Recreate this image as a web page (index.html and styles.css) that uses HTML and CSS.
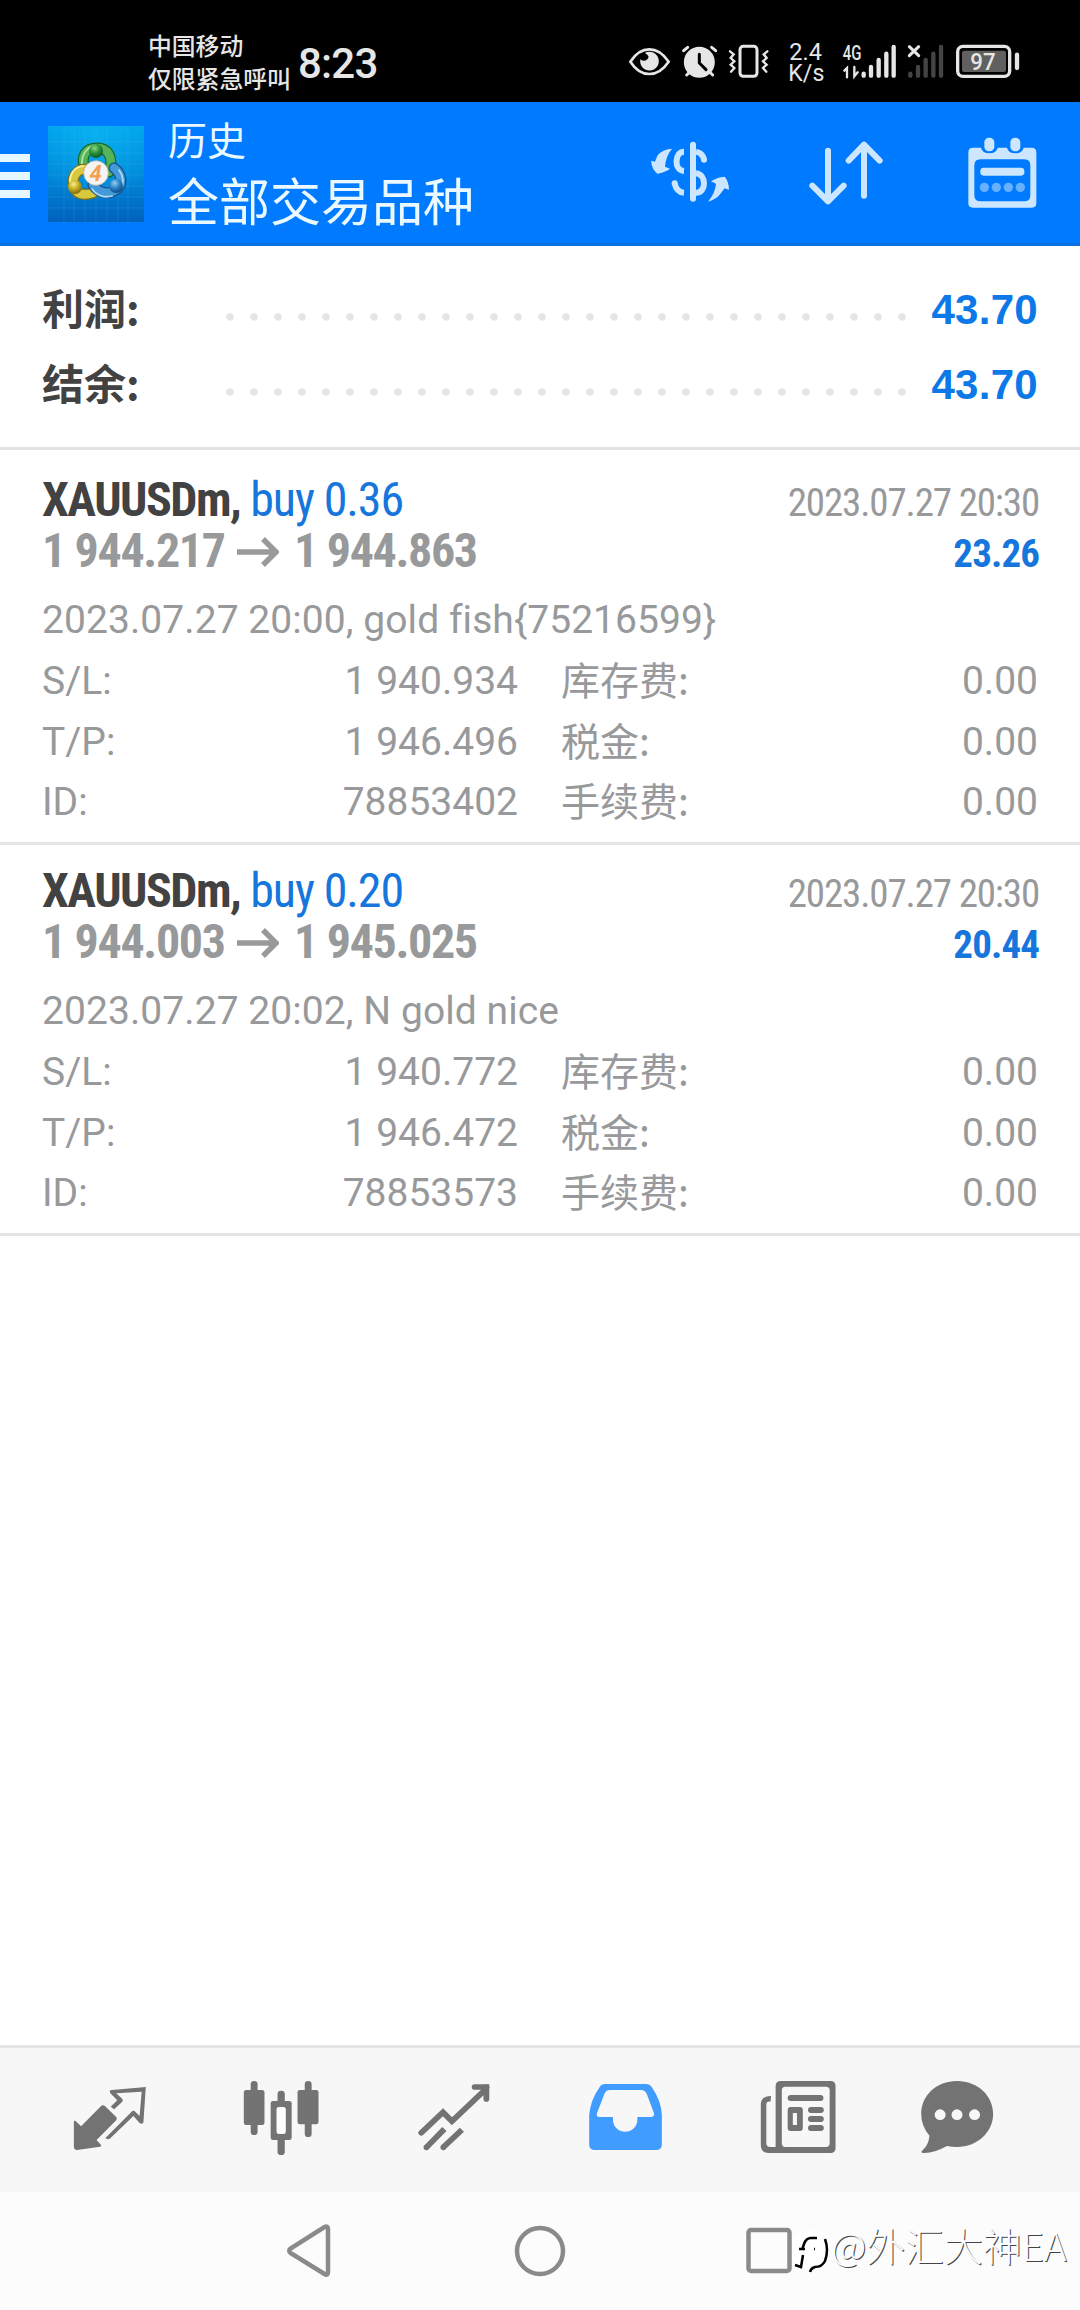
FILE: index.html
```html
<!DOCTYPE html>
<html lang="zh-CN">
<head>
<meta charset="utf-8">
<title>历史</title>
<link rel="stylesheet" href="styles.css">
</head>
<body>
<div class="screen">
  <header class="status">
    <div class="carrier"><span>中国移动</span><span>仅限紧急呼叫</span></div>
    <div class="clock">8:23</div>
    <svg class="status-icons" viewBox="0 0 1290 225">
      <g fill="none" stroke="#e6e6e6" stroke-width="8">
        <path d="M61 110Q85 73 118 73T176 110Q151 147 118 147T61 110Z"/>
        <rect x="390" y="64" width="51" height="90" rx="10" stroke-width="9"/>
        <path d="M360 79l11 9-9 11 11 10-11 10 11 10-10 11M472 79l-11 9 9 11-11 10 11 10-11 10 10 11" stroke-width="7" stroke-linecap="round"/>
        <rect x="1043" y="64" width="156" height="90" rx="16" stroke-width="10"/>
      </g>
      <path d="M105 84A28 28 0 1 1 91 103Q102 112 112 103T105 84Z" fill="#e6e6e6"/>
      <g stroke="#e6e6e6" stroke-width="9" stroke-linecap="round">
        <path d="M221 77l12-10M317 77l-12-10M230 150l12-12M308 150l-12-12"/>
        <circle cx="268" cy="112" r="42" fill="#e6e6e6"/>
        <path d="M268 88v26l20 20" fill="none" stroke="#000"/>
      </g>
      <g fill="#e6e6e6" font-family="Roboto, sans-serif">
        <text x="538" y="104" font-size="74" textLength="98" lengthAdjust="spacingAndGlyphs">2.4</text>
        <text x="535" y="169" font-size="70" textLength="108" lengthAdjust="spacingAndGlyphs">K/s</text>
        <text x="698" y="104" font-size="58" font-weight="500" textLength="56" lengthAdjust="spacingAndGlyphs">4G</text>
      </g>
      <g stroke="#e6e6e6" stroke-width="13" stroke-linecap="round">
        <path d="M761 146v6M783 126v26M806 105v47M829 86v66M851 66v86"/>
        <path d="M703 137l8-8v28M733 126v28l10-12" fill="none" stroke-width="7"/>
        <path d="M898 65l28 27M926 65l-28 27" stroke-width="9"/>
        <path d="M901 146v6M924 126v26M947 105v47M970 86v66M993 66v86" stroke="#444"/>
        <path d="M1221 89v40"/>
      </g>
      <rect x="1056" y="77" width="132" height="64" rx="7" fill="#606060"/>
      <text x="1081" y="136" font-size="74" fill="#e6e6e6" font-family="Roboto, sans-serif" font-weight="500" textLength="76" lengthAdjust="spacingAndGlyphs">97</text>
    </svg>
  </header>

  <div class="appbar">
    <div class="menu"><i></i><i></i><i></i></div>
    <svg class="logo" viewBox="0 0 96 96">
      <defs>
        <linearGradient id="sky" x1="0" y1="0" x2="0" y2="1"><stop offset="0" stop-color="#00a0ec"/><stop offset=".5" stop-color="#0088da"/><stop offset="1" stop-color="#0062bd"/></linearGradient>
        <radialGradient id="glow" cx=".5" cy=".1" r=".7"><stop offset="0" stop-color="#10c4f4" stop-opacity=".5"/><stop offset="1" stop-color="#10c4f4" stop-opacity="0"/></radialGradient>
        <radialGradient id="gr" cx=".4" cy=".3" r=".7"><stop offset="0" stop-color="#8fd487"/><stop offset=".5" stop-color="#2f943c"/><stop offset="1" stop-color="#0d5a25"/></radialGradient>
        <radialGradient id="ye" cx=".4" cy=".3" r=".7"><stop offset="0" stop-color="#f6ee8c"/><stop offset=".5" stop-color="#c8ae24"/><stop offset="1" stop-color="#7d6c0c"/></radialGradient>
        <radialGradient id="bl" cx=".4" cy=".3" r=".7"><stop offset="0" stop-color="#93cdf2"/><stop offset=".5" stop-color="#2f86c8"/><stop offset="1" stop-color="#0d4c8d"/></radialGradient>
      </defs>
      <rect width="96" height="96" fill="url(#sky)"/><rect width="96" height="96" fill="url(#glow)"/>
      <path d="M16 0v96M26 0v96M37 0v96M48 0v96M59 0v96M70 0v96M80 0v96M0 16h96M0 27h96M0 38h96M0 49h96M0 60h96M0 71h96M0 82h96" stroke="#5cc8f8" stroke-opacity=".15"/>
      <g fill="none" stroke-linecap="round">
        <path d="M37 43C32 30 38 22 49 22S66 31 61 46" stroke="#176b2a" stroke-width="11"/>
        <path d="M37 43C32 30 38 22 49 22S66 31 61 46" stroke="#55b35a" stroke-width="8.500"/>
        <path d="M34 39C33 29 39 21 46 20" stroke="#b4e3a5" stroke-width="1.800"/>
        <path d="M38 43C28 43 23 52 26 61S38 69 45 67" stroke="#7d7214" stroke-width="11"/>
        <path d="M38 43C28 43 23 52 26 61S38 69 45 67" stroke="#d8c83e" stroke-width="8.500"/>
        <path d="M35 40C26 41 22 48 22 55" stroke="#f8f2a0" stroke-width="1.800"/>
        <path d="M66 42C74 48 75 58 69 63S52 69 45 59" stroke="#15528d" stroke-width="11"/>
        <path d="M66 42C74 48 75 58 69 63S52 69 45 59" stroke="#4699d8" stroke-width="8.500"/>
        <path d="M71 44C76 51 76 58 72 64M44 63C49 70 57 72 64 70" stroke="#a9d9f5" stroke-width="1.800"/>
      </g>
      <circle cx="48" cy="25" r="7" fill="url(#gr)"/><circle cx="27" cy="61" r="7" fill="url(#ye)"/><circle cx="68" cy="60" r="7" fill="url(#bl)"/>
      <circle cx="48" cy="47" r="12.3" fill="#f6f4f2" stroke="#b8b8a8" stroke-width=".8"/>
      <text x="47.500" y="54.500" text-anchor="middle" font-family="Roboto, sans-serif" font-style="italic" font-weight="700" font-size="22" fill="#f2a052">4</text>
    </svg>
    <div class="titles"><span class="section">历史</span><span class="symbols">全部交易品种</span></div>
    <div class="actions">
      <svg width="80" height="73" viewBox="90 76 240 219" fill="#cce6ff">
        <path d="M156 117Q130 117 113 137Q107 150 105 156L93 153Q96 180 112 192Q136 188 150 177L135 171Q137 140 156 117Z"/>
        <path d="M264 276Q290 270 305 248Q311 240 313 236L327 240Q326 214 314 201Q290 203 273 215L288 222Q286 250 264 276Z"/>
        <g fill="none" stroke="#cce6ff" stroke-width="18">
          <path d="M219 105V267" stroke-linecap="round"/>
          <path d="M192 126C164 126 160 182 192 184M164 221C168 240 178 248 192 249"/>
          <path d="M228 126C242 129 250 136 252 150" />
          <path d="M228 191C260 194 260 250 228 249"/>
        </g>
        <circle cx="164" cy="221" r="9"/><circle cx="252" cy="150" r="9"/>
      </svg>
      <svg width="80" height="73" viewBox="558 76 240 219" fill="none" stroke="#cce6ff" stroke-width="18" stroke-linecap="round" stroke-linejoin="round">
        <path d="M624 123V275M577 228L624 275L671 228M732 258V105M686 153L732 105L779 153"/>
      </svg>
      <svg width="69" height="73" viewBox="1043 76 207 219">
        <path fill="#cce6ff" fill-rule="evenodd" d="M1058 114H1082Q1086 131 1107 131T1132 114H1160Q1164 131 1185 131T1210 114H1234Q1248 114 1248 128V281Q1248 294 1234 294H1058Q1044 294 1044 281V128Q1044 114 1058 114ZM1080 149Q1062 149 1062 167V257Q1062 275 1080 275H1212Q1230 275 1230 257V167Q1230 149 1212 149Z"/>
        <rect x="1092" y="84" width="30" height="41" rx="14" fill="#cce6ff"/><rect x="1170" y="84" width="30" height="41" rx="14" fill="#cce6ff"/>
        <rect x="1080" y="174" width="132" height="24" rx="10" fill="#cce6ff"/>
        <g fill="#66b0ff"><circle cx="1092" cy="233" r="14"/><circle cx="1128" cy="233" r="14"/><circle cx="1164" cy="233" r="14"/><circle cx="1200" cy="233" r="14"/></g>
      </svg>
    </div>
  </div>

  <main class="content">
    <section class="summary">
      <div class="total"><span class="name">利润:</span><span class="dots"></span><span class="amount">43.70</span></div>
      <div class="total"><span class="name">结余:</span><span class="dots"></span><span class="amount">43.70</span></div>
    </section>

    <article class="deal">
      <div class="line"><span class="title"><b>XAUUSDm,</b> <span class="side">buy 0.36</span></span><span class="time">2023.07.27 20:30</span></div>
      <div class="line"><span class="prices">1 944.217 <svg class="arrow" viewBox="0 0 42 30"><path d="M0 15H38M26 2L39 15L26 28"/></svg> 1 944.863</span><span class="profit">23.26</span></div>
      <div class="comment">2023.07.27 20:00, gold fish{75216599}</div>
      <div class="details">
        <span>S/L:</span><span class="num">1 940.934</span><span class="cjk">库存费:</span><span class="num">0.00</span>
        <span>T/P:</span><span class="num">1 946.496</span><span class="cjk">税金:</span><span class="num">0.00</span>
        <span>ID:</span><span class="num">78853402</span><span class="cjk">手续费:</span><span class="num">0.00</span>
      </div>
    </article>

    <article class="deal">
      <div class="line"><span class="title"><b>XAUUSDm,</b> <span class="side">buy 0.20</span></span><span class="time">2023.07.27 20:30</span></div>
      <div class="line"><span class="prices">1 944.003 <svg class="arrow" viewBox="0 0 42 30"><path d="M0 15H38M26 2L39 15L26 28"/></svg> 1 945.025</span><span class="profit">20.44</span></div>
      <div class="comment">2023.07.27 20:02, N gold nice</div>
      <div class="details">
        <span>S/L:</span><span class="num">1 940.772</span><span class="cjk">库存费:</span><span class="num">0.00</span>
        <span>T/P:</span><span class="num">1 946.472</span><span class="cjk">税金:</span><span class="num">0.00</span>
        <span>ID:</span><span class="num">78853573</span><span class="cjk">手续费:</span><span class="num">0.00</span>
      </div>
    </article>
  </main>

  <nav class="tabs">
    <svg viewBox="198 54 244 432" preserveAspectRatio="none">
      <path fill="#737373" d="M215 273Q219 271 223 276L236 289L292 230Q299 222 306 229L338 261Q342 266 338 271L281 330L294 345Q296 348 291 350L224 360Q215 359 215 350Z"/>
      <path fill="#737373" d="M319 184Q320 180 326 180L424 171L417 278Q412 284 406 279L388 258L321 325Q316 330 306 325L382 246Q388 239 394 246L406 258L412 185L338 190L356 207Q359 211 355 216L332 238L322 230L341 211L321 190Z"/>
    </svg>
    <svg viewBox="695 54 244 432" preserveAspectRatio="none">
      <g fill="#737373"><rect x="709" y="180" width="60" height="105" rx="7"/><rect x="729" y="153" width="20" height="162" rx="10"/><rect x="865" y="180" width="61" height="103" rx="7"/><rect x="886" y="153" width="20" height="168" rx="10"/><rect x="787" y="213" width="61" height="117" rx="7"/><rect x="807" y="182" width="21" height="193" rx="10"/></g>
      <rect x="804" y="231" width="27" height="81" rx="7" fill="#fcfcfc"/>
    </svg>
    <svg viewBox="1195 54 244 432" preserveAspectRatio="none" fill="none" stroke="#737373" stroke-width="17" stroke-linecap="round">
      <path d="M1222 308L1285 247L1311 274L1409 178M1377 171H1411V207"/><path d="M1237 352L1289 297M1286 352L1340 299" stroke-linecap="butt"/><path d="M1237 352h0M1286 352h0M1405 178l6 -6"/>
    </svg>
    <svg viewBox="128 54 244 432" preserveAspectRatio="none">
      <path fill="#409cff" fill-rule="evenodd" d="M192 162H311Q321 162 328 172Q356 214 357 255V346Q356 360 340 360H162Q147 360 146 346V255Q150 210 176 172Q182 162 192 162ZM207 180Q196 180 191 190L169 248Q165 261 176 261H215V268C215 318 286 318 286 268V261H326Q337 260 334 249L314 194Q309 180 296 180Z"/>
    </svg>
    <svg viewBox="633 54 244 432" preserveAspectRatio="none">
      <path fill="#737373" fill-rule="evenodd" d="M706 153H849Q864 153 864 168V355Q864 369 849 369H670Q647 369 647 345V222Q648 198 677 198L675 215Q663 213 663 224V340Q663 351 674 351H690V168Q690 153 706 153ZM718 170Q708 170 708 181V340Q708 351 718 351H836Q847 351 847 340V181Q847 170 836 170Z"/>
      <g fill="#737373"><rect x="725" y="195" width="104" height="18" rx="9"/><rect x="725" y="231" width="44" height="72" rx="9"/><rect x="784" y="231" width="46" height="18" rx="9"/><rect x="784" y="258" width="46" height="18" rx="9"/><rect x="784" y="285" width="46" height="18" rx="9"/></g>
      <rect x="740" y="249" width="12" height="36" fill="#f7f7f7"/>
    </svg>
    <svg viewBox="1091 54 244 432" preserveAspectRatio="none">
      <path fill="#737373" d="M1213 153C1274 153 1318 198 1318 252S1272 351 1213 351Q1198 351 1184 348Q1144 371 1114 369Q1106 367 1113 361Q1131 344 1133 317Q1109 288 1109 252C1109 197 1153 153 1213 153Z"/>
      <g fill="#f7f7f7"><circle cx="1164" cy="254" r="16"/><circle cx="1213" cy="254" r="16"/><circle cx="1264" cy="254" r="16"/></g>
    </svg>
  </nav>

  <footer class="sysnav">
    <svg width="54" height="54" viewBox="0 0 54 54"><path d="M43.500 3Q47 1.500 47 5V48Q47 52 43.500 50L9.500 29Q7 26.500 9.500 24.500Z"/></svg>
    <svg width="54" height="54" viewBox="0 0 54 54"><circle cx="27" cy="27" r="23"/></svg>
    <svg width="54" height="54" viewBox="0 0 54 54"><rect x="3.500" y="6" width="41" height="41" rx="2.500"/></svg>
    <div class="watermark">
      <svg width="38" height="48" viewBox="780 2228 38 48"><rect x="792" y="2231" width="37" height="38" rx="12"/><path d="M817 2238H811Q806 2238 804 2244L802 2250M799 2249H805M803 2255L801 2267L795 2265M814 2249h1M825 2239Q829 2250 825 2261Q822 2267 815 2267Q811 2268 810 2272"/></svg>
      <span>@外汇大神EA</span>
    </div>
  </footer>
</div>
</body>
</html>
```
FILE: styles.css
```css
* { box-sizing: border-box; }
body { margin: 0; background: #fff; font-family: Roboto, "Noto Sans CJK SC", sans-serif; }
svg { display: block; flex: none; }
.screen { width: 1080px; height: 2310px; display: flex; flex-direction: column; overflow: hidden; }

.status { height: 102px; background: #000; color: #e6e6e6; display: flex; align-items: flex-start; padding: 25px 40px 0 148px; }
.carrier { display: flex; flex-direction: column; width: 150px; padding-top: 3px; font: 500 23.800px/33px "Noto Sans CJK SC", sans-serif; white-space: nowrap; }
.clock { font-size: 42px; line-height: 50px; padding-top: 14px; letter-spacing: -0.8px; font-weight: 500; }
.status-icons { width: 430px; height: 75px; margin-left: auto; }

.appbar { height: 144px; background: #007aff; border-bottom: 3px solid #0c70e2; display: flex; align-items: flex-start; padding-right: 43px; color: #fff; }
.menu { width: 30px; margin: 52px 18px 0 0; display: flex; flex-direction: column; gap: 10px; }
.menu i { height: 8px; background: #e6f8ff; }
.logo { width: 96px; height: 96px; margin-top: 24px; }
.titles { display: flex; flex-direction: column; margin-left: 24px; padding-top: 6px; font-family: "Noto Sans CJK SC", sans-serif; color: #eaf8ff; }
.section { font-size: 39px; line-height: 61px; }
.symbols { font-size: 51px; line-height: 60px; }
.actions { margin: 33px 0 0 auto; display: flex; }
.actions svg { margin-left: 76px; }
.actions svg:last-child { margin-left: 82px; }

.content { flex: 1; }
.summary { height: 204px; padding: 26px 42px 0; border-bottom: 3px solid #e4e4e4; }
.total { height: 75px; line-height: 75px; display: flex; font-size: 42px; font-weight: 700; }
.name { width: 176px; margin-top: -3px; color: #424242; font-family: "Noto Sans CJK SC", sans-serif; }
.dots { width: 696px; height: 8px; margin-top: 41px; background: radial-gradient(circle at 12px 4px, #e5e5e5 3.4px, transparent 4.1px) 0 0 / 24px 8px; }
.amount { margin-left: auto; color: #0d78e8; font-family: "Liberation Sans", sans-serif; letter-spacing: .3px; }

.deal { padding: 20px 42px 10px; border-bottom: 3px solid #e4e4e4; color: #98999b; font-size: 39px; line-height: 61px; }
.summary + .deal { padding-top: 24px; }
.line { display: flex; justify-content: space-between; align-items: baseline; height: 51px; line-height: 51px; font-family: "Roboto Condensed", Roboto, sans-serif; white-space: nowrap; }
.title { font-size: 48px; letter-spacing: -1.1px; }
.title b { color: #424242; letter-spacing: -1.5px; }
.side { color: #1676dc; }
.time { letter-spacing: -1.15px; margin-right: -1px; }
.prices { display: flex; font-size: 48px; font-weight: 700; white-space: pre; letter-spacing: -1.35px; }
.arrow { width: 42px; height: 30px; margin: 12px 5px 0 3px; fill: none; stroke: #98999b; stroke-width: 5.500px; }
.profit { color: #1676dc; font-weight: 700; letter-spacing: -.9px; margin-right: -1px; }
.comment { margin-top: 14px; height: 61px; letter-spacing: .07px; }
.details { display: grid; grid-template-columns: 200px 276px 1fr 200px; grid-auto-rows: 60.500px; height: 181px; }
.num { text-align: right; }
.cjk { padding-left: 43px; margin-top: -3px; font-family: "Noto Sans CJK SC", sans-serif; }

.tabs { height: 147px; background: #f7f7f7; border-top: 3px solid #e4e6e6; display: grid; grid-template-columns: 172px 170px 175px 168px 177px 142px; padding-left: 24px; justify-items: center; }
.tabs svg { width: 84px; height: 144px; }

.sysnav { height: 118px; background: #fcfcfc; display: flex; gap: 178px; padding: 32px 0 0 281px; position: relative; }
.sysnav > svg { fill: none; stroke: #8a8a8a; stroke-width: 4.500px; }
.watermark { position: absolute; left: 780px; top: 36px; display: flex; }
.watermark svg { margin-right: 13px; overflow: visible; }
.watermark rect { fill: #fff; }
.watermark path { fill: none; stroke: #000; stroke-width: 2.500px; }
.watermark span { margin-top: -6px; font: 300 38.800px/44px "Noto Sans CJK SC", sans-serif; color: #fdfdfd; text-shadow: 1px 1px 0 #444; white-space: nowrap; }
```
